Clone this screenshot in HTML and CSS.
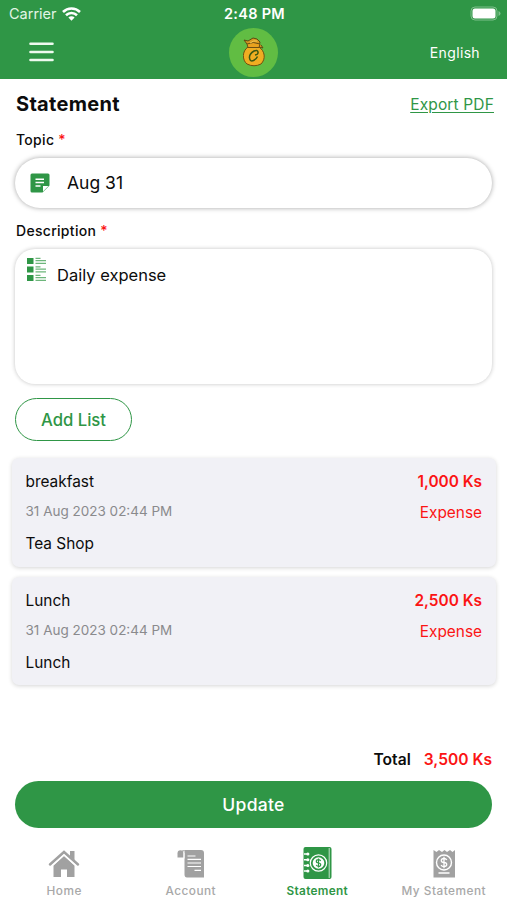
FILE: index.html
```html
<!DOCTYPE html>
<html lang="en">
<head>
    <meta charset="UTF-8">
    <meta name="viewport" content="width=device-width, initial-scale=1.0">
    <title>Statement</title>
    <link rel="stylesheet" href="styles.css">
</head>
<body>
    <header class="header">
        <div class="status-bar">
            <div class="carrier">
                <span>Carrier</span>
                <svg width="19" height="14" viewBox="0 0 19 14" fill="none" stroke="#fff" stroke-width="2.6">
                    <path d="M1 5a12.2 12.2 0 0 1 17 0"/>
                    <path d="M4 8.3a7.9 7.9 0 0 1 11 0"/>
                    <path d="M9.5 13.8L6.4 10.6a4.4 4.4 0 0 1 6.2 0z" fill="#fff" stroke="none"/>
                </svg>
            </div>
            <span class="time">2:48 PM</span>
            <svg class="battery" width="31" height="15" viewBox="0 0 31 15">
                <rect x="1" y="1" width="26" height="13" rx="4" fill="none" stroke="#7dbf8a"/>
                <rect x="2.5" y="2.5" width="23" height="10" rx="2.5" fill="#fff"/>
                <path d="M28.5 5v5q2-.8 2-2.5t-2-2.5z" fill="#7dbf8a"/>
            </svg>
        </div>
        <div class="toolbar">
            <svg class="menu" width="25" height="20" viewBox="0 0 25 20" stroke="#eefaef" stroke-width="2.6" stroke-linecap="round">
                <path d="M1.5 1.8h22M1.5 10h22M1.5 18h22"/>
            </svg>
            <div class="logo">
                <svg width="22" height="30" viewBox="0 0 22 30">
                    <path d="M4 7L1 3l4 1 5-3 4 1 3 3-1 5 4 1-2-3" fill="#d99a22" stroke="#5c4a12" stroke-width="1"/>
                    <path d="M5 10C-1 14-1 23 4 27q7 3.5 14 0c5-5 4-13-2-17z" fill="#efad22" stroke="#70500f" stroke-width="1"/>
                    <path d="M4 7q6-3 13 0l-1 3.5H5z" fill="#e9a21f" stroke="#6b4f12" stroke-width="1"/>
                    <path d="M7 6q4-3 7-2" fill="none" stroke="#f7ca50"/>
                    <path d="M12 18q3.5-.5 3-3t-4-1q-5 3-4.5 7t4 2.5q3-1.5 4-4" fill="none" stroke="#3b5812" stroke-width="1.5"/>
                </svg>
            </div>
            <span class="language">English</span>
        </div>
    </header>

    <main class="content">
        <div class="title-row">
            <h1>Statement</h1>
            <a class="export" href="#">Export PDF</a>
        </div>

        <div class="label">Topic <span class="required">*</span></div>
        <div class="input">
            <svg width="20" height="20" viewBox="0 0 20 20">
                <path d="M2 .5h16a1.5 1.5 0 0 1 1.5 1.5v10.5L12.5 19.5H2A1.5 1.5 0 0 1 .5 18V2A1.5 1.5 0 0 1 2 .5z" fill="#2f9646"/>
                <path d="M13 18.5V13h5.5z" fill="#fff"/>
                <path d="M5.5 6.3h8.5M5.5 9.6h8.5M5.5 12.9h5" stroke="#fff" stroke-width="1.5"/>
            </svg>
            <span>Aug 31</span>
        </div>

        <div class="label label-description">Description <span class="required">*</span></div>
        <div class="textarea">
            <svg width="20" height="25" viewBox="0 0 20 25">
                <path d="M0 1h6.5v6H0zM0 9.5h6.5v6H0zM0 18h6.5v6H0z" fill="#2f9646"/>
                <path d="M8.5 1.3h5M8.5 3.7h10.5M8.5 6.3h10.5M8.5 9.8h5M8.5 12.2h10.5M8.5 14.8h10.5M8.5 18.3h5M8.5 20.7h10.5M8.5 23.3h10.5" stroke="#6db67b" stroke-width="1.3"/>
            </svg>
            <span>Daily expense</span>
        </div>

        <button class="add-button">Add List</button>

        <div class="list">
            <div class="card">
                <div class="card-info">
                    <span class="name">breakfast</span>
                    <span class="date">31 Aug 2023 02:44 PM</span>
                    <span class="note">Tea Shop</span>
                </div>
                <div class="card-amount">
                    <span class="amount">1,000 Ks</span>
                    <span class="type">Expense</span>
                </div>
            </div>
            <div class="card">
                <div class="card-info">
                    <span class="name">Lunch</span>
                    <span class="date">31 Aug 2023 02:44 PM</span>
                    <span class="note">Lunch</span>
                </div>
                <div class="card-amount">
                    <span class="amount">2,500 Ks</span>
                    <span class="type">Expense</span>
                </div>
            </div>
        </div>

        <div class="total">
            <span>Total</span>
            <span class="total-amount">3,500 Ks</span>
        </div>
        <button class="update-button">Update</button>
    </main>

    <nav class="tabs">
        <div class="tab">
            <svg width="32" height="34" viewBox="0 0 32 34">
                <path d="M5.5 19.5L16 10l10.5 9.5V31H19v-7.500h-6V31H5.5z" fill="#a1a1a1"/>
                <path d="M22 5h4.5v9.5L22 10.5z" fill="#a1a1a1"/>
                <path d="M2 18.5L16 6l14 12.5" fill="none" stroke="#a1a1a1" stroke-width="2.5" stroke-linecap="round"/>
                <path d="M4 19.7L16 9l12 10.7" fill="none" stroke="#fff" stroke-width="1.2"/>
            </svg>
            <span>Home</span>
        </div>
        <div class="tab">
            <svg width="32" height="34" viewBox="0 0 32 34">
                <path d="M2.5 11.5V7.3q0-3 3-3t3 3v4.2z" fill="#a1a1a1"/>
                <path d="M7 4h19q3 0 3 3v24.5H12q-2.5 0-2.5-3V7z" fill="#a1a1a1"/>
                <path d="M9 4.5v8" stroke="#fff" stroke-width="1"/>
                <path d="M12.5 10h8M12.5 13.4h13.5M12.5 17h13.5M12.5 20.5h13.5M19.5 24.3h6.5" stroke="#fff" stroke-width="1.2"/>
            </svg>
            <span>Account</span>
        </div>
        <div class="tab active">
            <svg width="32" height="34" viewBox="0 0 32 34">
                <rect x="2.5" y="1" width="28" height="32" rx="2" fill="#2f9646"/>
                <path d="M28.2 2v30" stroke="#c5e4cc" stroke-width="1"/>
                <path d="M3 8h4M3 13.7h4M3 19.4h4M3 25.1h4" stroke="#fff" stroke-width="1.5"/>
                <path d="M6.8 8h.1M6.8 13.7h.1M6.8 19.4h.1M6.8 25.1h.1" stroke="#fff" stroke-width="3" stroke-linecap="round"/>
                <circle cx="17.5" cy="17" r="8.2" fill="none" stroke="#fff" stroke-width="1.2"/>
                <circle cx="17.5" cy="17" r="5.8" fill="#fff"/>
                <path d="M19.7 15q-.6-1.3-2.2-1.3-2.2 0-2.2 1.6t2.2 1.7 2.2 1.7-2.2 1.6q-1.8 0-2.3-1.4M17.5 12.5v9" fill="none" stroke="#2f9646" stroke-width="1.2"/>
            </svg>
            <span>Statement</span>
        </div>
        <div class="tab">
            <svg width="32" height="34" viewBox="0 0 32 34">
                <path d="M5.5 4l3 2 2.5-2 3 2 2.5-2 2.5 2 3-2 2.5 2 2.5-2v27.5h-21.500z" fill="#a1a1a1"/>
                <circle cx="16" cy="16.5" r="7.5" fill="none" stroke="#fff" stroke-width="1.4"/>
                <path d="M18.8 14q-.8-1.5-2.8-1.5-2.7 0-2.7 2t2.7 2 2.7 2-2.7 2q-2.2 0-2.9-1.6M16 10.8v11.4" fill="none" stroke="#fff" stroke-width="1.3"/>
                <path d="M10.5 27h11" stroke="#fff" stroke-width="1.5"/>
            </svg>
            <span>My Statement</span>
        </div>
    </nav>
</body>
</html>
```
FILE: styles.css
```css
* {
    box-sizing: border-box;
}

body {
    margin: 0;
    height: 900px;
    display: flex;
    flex-direction: column;
    overflow: hidden;
    background: #fff;
    color: #0c0c0c;
    font-family: Inter, 'Liberation Sans', sans-serif;
}

svg {
    display: block;
    flex-shrink: 0;
}

button {
    font-family: inherit;
    cursor: pointer;
}

.header {
    height: 79px;
    background: #2f9646;
    color: #fff;
}

.status-bar {
    display: grid;
    grid-template-columns: 1fr auto 1fr;
    align-items: center;
    height: 27px;
    padding: 0 6px 0 9px;
    font-size: 14.5px;
}

.carrier {
    display: flex;
    align-items: center;
    gap: 5px;
    color: #e2f5e5;
}

.time {
    margin-left: -1px;
    font-size: 14.5px;
    font-weight: 600;
    letter-spacing: 0.3px;
}

.battery {
    justify-self: end;
}

.toolbar {
    display: grid;
    grid-template-columns: 1fr 49px 1fr;
    align-items: center;
    height: 50px;
    padding: 0 28px;
}

.logo {
    width: 49px;
    height: 49px;
    border-radius: 50%;
    background: #61bd43;
    display: flex;
    align-items: center;
    justify-content: center;
}

.menu {
    margin-left: 1px;
}

.language {
    justify-self: end;
    margin-right: -1px;
    font-size: 14px;
    letter-spacing: 0.35px;
}

.content {
    flex: 1;
    display: flex;
    flex-direction: column;
    padding: 13px 15px 0;
}

.title-row {
    display: flex;
    align-items: center;
    justify-content: space-between;
    height: 24px;
    margin: 0 -2px 0 1px;
}

h1 {
    margin: 0;
    font-size: 20px;
    font-weight: 700;
    letter-spacing: 0.3px;
}

.export {
    color: #2f9646;
    font-size: 15.5px;
    letter-spacing: 0.15px;
    text-underline-offset: 2px;
}

.label {
    height: 20px;
    margin: 14px 0 8px 1px;
    font-size: 14px;
    font-weight: 500;
    letter-spacing: 0.3px;
    line-height: 20px;
}

.label-description {
    margin: 13px 0 8px 1px;
}

.required {
    color: #fb1414;
}

.input {
    display: flex;
    align-items: center;
    gap: 17px;
    height: 50px;
    padding: 0 15px 1px;
    border-radius: 25px;
    background: #fff;
    box-shadow: 0 0 5px rgba(0, 0, 0, 0.36);
    font-size: 17.5px;
}

.textarea {
    display: flex;
    align-items: flex-start;
    gap: 10px;
    height: 135px;
    padding: 8px 12px;
    border-radius: 20px;
    background: #fff;
    box-shadow: 0 0 4px rgba(0, 0, 0, 0.24);
    font-size: 16.5px;
}

.textarea span {
    margin-top: 8px;
    line-height: 20px;
}

.add-button {
    width: 117px;
    height: 43px;
    margin-top: 14px;
    border: 1.5px solid #2f9646;
    border-radius: 22px;
    background: #fff;
    color: #2f9646;
    font-size: 16.7px;
    font-weight: 500;
}

.list {
    display: flex;
    flex-direction: column;
    gap: 10px;
    margin: 17px -4px 0 -3px;
}

.card {
    display: flex;
    justify-content: space-between;
    height: 108.5px;
    padding: 14px 14px 12px 13.5px;
    border-radius: 7px;
    background: #f1f1f6;
    box-shadow: 0 1px 4px rgba(0, 0, 0, 0.17);
    font-size: 15.4px;
    line-height: 20px;
}

.card-info {
    display: flex;
    flex-direction: column;
}

.date {
    margin: 9px 0 13px;
    color: #8a8a8d;
    font-size: 13.5px;
}

.card-amount {
    display: flex;
    flex-direction: column;
    gap: 11px;
    align-items: flex-end;
    color: #fb1414;
}

.amount {
    font-weight: 600;
}

.total {
    display: flex;
    justify-content: flex-end;
    gap: 13px;
    margin: 65px 0 0;
    font-size: 15.6px;
    font-weight: 600;
    line-height: 20px;
}

.total-amount {
    color: #fb1414;
}

.update-button {
    height: 47px;
    margin-top: 11px;
    border: none;
    border-radius: 24px;
    background: #2f9646;
    color: #fff;
    font-size: 17.5px;
    font-weight: 500;
    letter-spacing: 0.3px;
}

.tabs {
    display: grid;
    grid-template-columns: repeat(4, 1fr);
    height: 54px;
    padding-left: 1px;
}

.tab {
    display: flex;
    flex-direction: column;
    align-items: center;
    gap: 3px;
    color: #a8a8a8;
    font-size: 11.8px;
    font-weight: 500;
    letter-spacing: 0.5px;
    line-height: 16px;
}

.active {
    color: #2f9646;
    font-weight: 600;
    letter-spacing: 0.3px;
}
```
